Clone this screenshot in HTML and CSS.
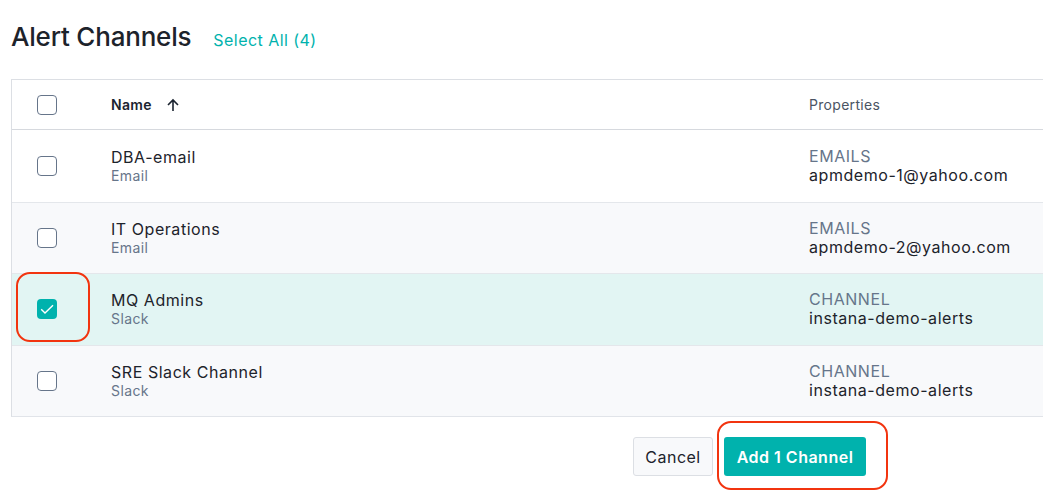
FILE: index.html
```html
<!DOCTYPE html>
<html>
<head>
<meta charset="utf-8">
<link rel="stylesheet" href="styles.css">
</head>
<body>
<div class="page">
  <div class="title-row">
    <h1 class="title">Alert Channels</h1>
    <a class="select-all">Select All (4)</a>
  </div>
  <div class="table">
    <div class="row head">
      <div class="cell-check"><span class="cb"></span></div>
      <div class="cell-name"><span class="th-name">Name</span>
        <svg class="sort" width="14" height="14" viewBox="0 0 14 14"><path d="M7 13V2M2 7l5-5 5 5" fill="none" stroke="#1b2430" stroke-width="1.6"/></svg>
      </div>
      <div class="cell-props th-props">Properties</div>
    </div>
    <div class="row">
      <div class="cell-check"><span class="cb"></span></div>
      <div class="cell-name"><div class="main">DBA-email</div><div class="sub">Email</div></div>
      <div class="cell-props"><div class="label">EMAILS</div><div class="main">apmdemo-1@yahoo.com</div></div>
    </div>
    <div class="row striped">
      <div class="cell-check"><span class="cb"></span></div>
      <div class="cell-name"><div class="main">IT Operations</div><div class="sub">Email</div></div>
      <div class="cell-props"><div class="label">EMAILS</div><div class="main">apmdemo-2@yahoo.com</div></div>
    </div>
    <div class="row selected">
      <div class="cell-check"><span class="cb checked"><svg width="20" height="20" viewBox="0 0 20 20"><path d="M4.2 10.3l3.8 3.8L16 6.2" fill="none" stroke="#fff" stroke-width="1.4"/></svg></span><span class="mark mark-check"></span></div>
      <div class="cell-name"><div class="main">MQ Admins</div><div class="sub">Slack</div></div>
      <div class="cell-props"><div class="label">CHANNEL</div><div class="main">instana-demo-alerts</div></div>
    </div>
    <div class="row striped">
      <div class="cell-check"><span class="cb"></span></div>
      <div class="cell-name"><div class="main">SRE Slack Channel</div><div class="sub">Slack</div></div>
      <div class="cell-props"><div class="label">CHANNEL</div><div class="main">instana-demo-alerts</div></div>
    </div>
  </div>
  <div class="actions">
    <button class="btn cancel">Cancel</button>
    <div class="primary-wrap">
      <button class="btn primary">Add 1 Channel</button>
      <span class="mark mark-btn"></span>
    </div>
  </div>
</div>
</body>
</html>
```
FILE: styles.css
```css
* { box-sizing: border-box; }
html, body { margin: 0; padding: 0; background: #fff; }
body { font-family: Inter, "Noto Sans", sans-serif; color: #1b2430; }
.page { padding: 0 0 30px 11px; width: 1043px; overflow: hidden; }
.title-row { display: flex; align-items: baseline; height: 79px; padding-top: 21px; }
.title { margin: 0; font-size: 26px; font-weight: 500; color: #1d232b; letter-spacing: -0.2px; }
.select-all { margin-left: 22px; font-size: 16px; color: #00b2ad; letter-spacing: 0.45px; }
.table { border: 1px solid #dcdfe4; border-right: none; border-bottom-color: #e1e4e9; width: 1060px; }
.row { display: flex; align-items: center; height: 71.5px; border-top: 1px solid #e4e7eb; }
.row.head { height: 50px; border-top: none; border-bottom: 1px solid #d6d9de; }
.row.head + .row { border-top: none; }
.row.striped { background: #f8f9fb; }
.row.selected { background: #e2f5f3; }
.cell-check { width: 99px; padding-left: 25px; display: flex; align-items: center; position: relative; height: 100%; }
.cb { width: 20px; height: 20px; border: 1.5px solid #66758a; border-radius: 4px; display: block; background: #fff; }
.cb.checked { background: #00b2ad; border: none; position: relative; }
.cb.checked svg { display: block; }
.cell-name { width: 698px; display: flex; flex-direction: column; justify-content: center; }
.head .cell-name { flex-direction: row; align-items: center; justify-content: flex-start; }
.th-name { font-size: 14px; font-weight: 600; color: #1b2430; letter-spacing: 0.3px; }
.sort { margin-left: 14px; }
.th-props { font-size: 14px; color: #4a5463; letter-spacing: 0.3px; }
.main { font-size: 16px; line-height: 19px; color: #1d232b; letter-spacing: 0.55px; }
.sub { font-size: 14px; line-height: 17px; color: #66758a; letter-spacing: 0.4px; }
.label { font-size: 16px; line-height: 19px; color: #66758a; letter-spacing: 0.55px; }
.cell-props { flex: 1; }
.actions { display: flex; justify-content: flex-end; align-items: center; padding-top: 20px; padding-right: 177px; gap: 11px; }
.btn { font-family: inherit; font-size: 16px; height: 39px; border-radius: 3px; cursor: pointer; }
.cancel { background: #f8f9fb; border: 1px solid #dcdfe4; color: #1d232b; padding: 0; width: 80px; letter-spacing: 0.5px; }
.primary-wrap { position: relative; }
.primary { background: #00b2ad; color: #fff; border: none; font-weight: 600; width: 142px; padding: 0; display: block; letter-spacing: 0.5px; }
.mark { position: absolute; border: 2.5px solid #f2340f; border-radius: 14px; pointer-events: none; }
.mark-check { left: 4px; top: -2px; width: 74px; height: 70px; }
.mark-btn { left: -7px; top: -16px; width: 171px; height: 69px; }
```
